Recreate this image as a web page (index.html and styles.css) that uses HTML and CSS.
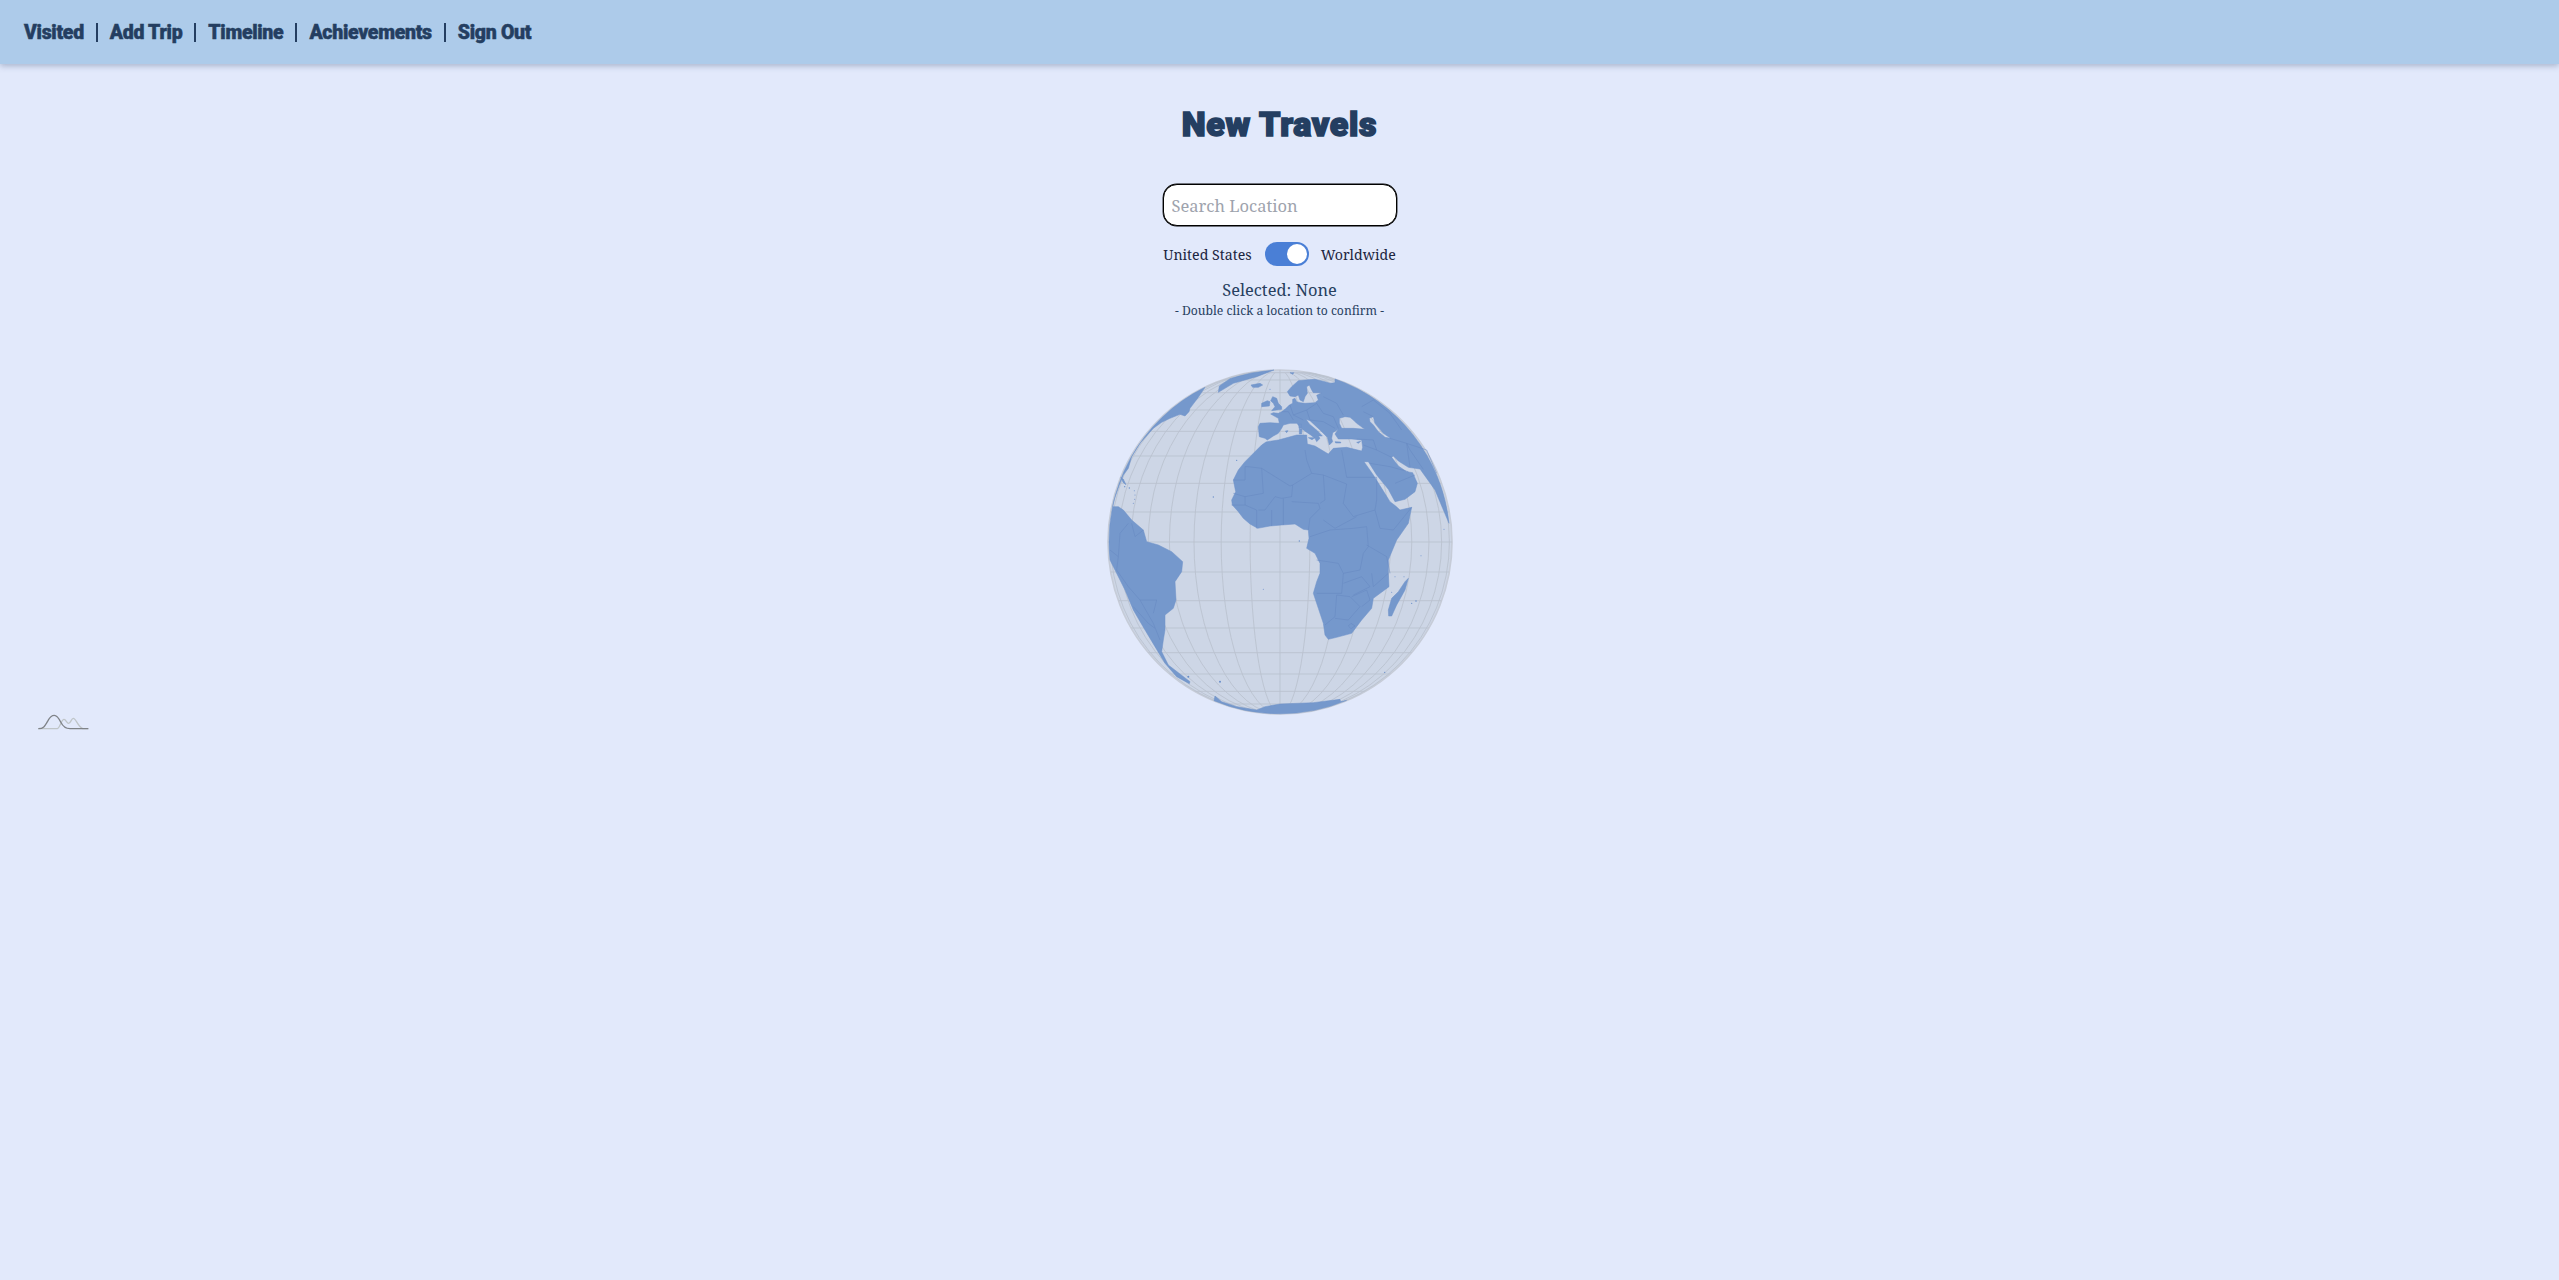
FILE: index.html
```html
<!DOCTYPE html>
<html lang="en">
<head>
<meta charset="utf-8">
<title>New Travels</title>
<link rel="stylesheet" href="styles.css">
</head>
<body>
<nav class="topbar">
  <a class="nav-link">Visited</a><span class="nav-sep"></span>
  <a class="nav-link">Add Trip</a><span class="nav-sep"></span>
  <a class="nav-link">Timeline</a><span class="nav-sep"></span>
  <a class="nav-link">Achievements</a><span class="nav-sep"></span>
  <a class="nav-link">Sign Out</a>
</nav>
<main class="content">
  <h1 class="title">New Travels</h1>
  <input class="search" type="text" placeholder="Search Location">
  <div class="scope">
    <span>United States</span>
    <span class="toggle"><span class="knob"></span></span>
    <span>Worldwide</span>
  </div>
  <p class="selected">Selected: None</p>
  <p class="hint">- Double click a location to confirm -</p>
  <svg class="globe" viewBox="0 0 1140 1080" role="img" aria-label="Globe">
    <defs>
      <clipPath id="grat"><rect x="0" y="38" width="1140" height="1016"/></clipPath>
      <clipPath id="disc"><circle cx="570" cy="546" r="516"/></clipPath>
    </defs>
    <circle class="ocean" cx="570" cy="546" r="516"/>
    <g class="grid" clip-path="url(#grat)">
      <ellipse cx="570" cy="546" rx="89.6" ry="516"/>
      <ellipse cx="570" cy="546" rx="176.5" ry="516"/>
      <ellipse cx="570" cy="546" rx="258" ry="516"/>
      <ellipse cx="570" cy="546" rx="331.7" ry="516"/>
      <ellipse cx="570" cy="546" rx="395.3" ry="516"/>
      <ellipse cx="570" cy="546" rx="446.9" ry="516"/>
      <ellipse cx="570" cy="546" rx="484.9" ry="516"/>
      <ellipse cx="570" cy="546" rx="508.2" ry="516"/>
    </g>
    <g clip-path="url(#disc)">
      <path class="grid" d="M570,30V1062M54,546H1086M54,456H1086M54,636H1086M54,370H1086M54,722H1086M54,288H1086M54,804H1086M54,214H1086M54,878H1086M54,150H1086M54,942H1086M54,98H1086M54,994H1086M54,60H1086M54,1032H1086M54,38H1086M54,1054H1086"/>
    </g>

    <path class="land" fill-rule="evenodd" d="M528,246L515,255L500,270L480,290L465,305L445,330L430,360L437,395L425,420L427,435L445,455L460,475L480,492L503,505L540,498L575,495L615,492L640,508L655,510L657,535L650,565L675,580L690,610L690,640L680,665L670,700L685,745L700,790L705,825L715,838L740,832L785,820L815,780L845,745L850,715L897,680L895,640L895,600L920,540L955,490L965,442L930,450L917,438L900,425L875,385L850,345L822,305L835,305L860,345L895,388L915,425L945,418L975,395L982,370L968,338L950,335L925,318L905,292L910,288L925,303L955,322L990,327L1035,390L1077,490A516,516 0 0 0 735,57L735,68L720,70L705,65L675,58L645,60L625,62L605,80L592,95L600,108L615,110L625,105L630,120L640,125L645,110L652,100L650,80L658,75L665,90L670,98L695,98L680,106L685,120L675,128L645,130L630,128L620,125L615,115L608,118L608,130L598,135L585,148L575,155L565,160L550,158L542,162L565,175L568,190L540,188L510,190L505,200L508,230L525,235L532,240L550,228L565,220L575,205L580,195L600,190L620,190L640,210L662,225L675,235L680,245L690,235L685,228L697,228L682,212L658,192L648,178L660,182L690,210L712,232L718,255L728,245L725,235L728,218L745,208L735,222L745,237L785,237L815,240L818,262L815,273L770,262L730,265L715,282L675,258L652,252L650,225L620,225L565,240L532,245ZM748,175L765,170L780,172L790,180L800,190L825,208L790,205L755,205L748,190ZM838,175L850,170L855,190L880,220L902,235L885,232L865,215L850,195L840,185Z"/>

    <path class="land" d="M60,600A516,516 0 0 1 345,82L325,112L300,145L297,155L285,168L270,163L240,175L215,187L190,205L150,250L125,290L115,325L100,345L88,375L72,420L68,440L85,440L100,450L125,480L160,510L170,545L205,555L245,575L278,605L275,635L255,665L258,720L250,745L225,765L225,810L220,840L215,875L235,915L300,965L298,971L260,950L225,910L195,860L165,810L130,750L105,690L75,630Z"/>

    <path class="land" d="M385,97L388,78L420,56A516,516 0 0 1 552,30L500,50L430,70Z"/>
    <path class="land" d="M375,1008L395,1025L440,1040L500,1050L525,1040L570,1032L670,1028L750,1018L752,1025L770,1021A516,516 0 0 1 372,1022Z"/>
    <path class="land" d="M955,655L945,690L920,735L905,768L896,768L895,750L905,715L925,695L945,665Z"/>
    <path class="land" d="M548,110L560,115L565,130L575,140L575,148L545,152L555,140L550,130L542,122Z"/>
    <path class="land" d="M515,130L532,122L540,125L538,138L515,140Z"/>
    <path class="land" d="M483,75L510,70L518,75L505,82L488,82Z"/>
    <path class="land" d="M600,38L612,38L608,43Z"/>
    <path class="land" d="M626,192L634,192L634,204L627,205ZM628,206L636,206L635,222L628,222ZM655,233L675,233L666,239ZM735,245L752,246L752,249L737,249ZM800,247L812,244L805,250ZM586,213L594,212L590,218Z"/>
    <path class="land" d="M92,352L100,358L108,374L100,368Z"/>

    <g class="specks">
      <circle cx="440" cy="301" r="2"/><circle cx="370" cy="411" r="2"/><circle cx="520" cy="688" r="1.5"/>
      <circle cx="628" cy="543" r="2"/><circle cx="965" cy="730" r="2"/><circle cx="978" cy="723" r="2.5"/>
      <circle cx="915" cy="650" r="1.5"/><circle cx="942" cy="650" r="1.5"/><circle cx="905" cy="697" r="1.5"/>
      <circle cx="1062" cy="508" r="1.5"/><circle cx="884" cy="937" r="2"/><circle cx="993" cy="587" r="1.5"/>
      <circle cx="390" cy="965" r="3"/><circle cx="295" cy="950" r="3"/><circle cx="540" cy="88" r="1.5"/>
      <circle cx="104" cy="380" r="2"/><circle cx="118" cy="384" r="2"/>
      <circle cx="133" cy="392" r="1.5"/><circle cx="135" cy="405" r="1.5"/><circle cx="134" cy="418" r="1.5"/>
      <circle cx="130" cy="430" r="1.5"/>
    </g>

    <path class="border" d="M465,320L475,320L515,325L600,378L608,375L665,340L650,300L645,270M430,360L465,360L465,320M515,325L520,400L465,410L430,400M608,375L605,410L575,415L555,410L525,450L505,450M465,410L465,435L425,435M465,435L500,450L500,505M545,450L545,498M580,415L580,495M605,425L685,430L690,445L660,475L655,510M665,340L700,345L705,420L690,430M700,345L770,372L760,430L790,470M755,270L770,352L860,352M860,352L860,420L855,450L805,465L790,470M965,442L910,510L870,505L855,450M700,480L735,505L800,470M660,530L720,510L790,505L830,500L835,560L820,580L810,630L760,640L745,610L680,600M830,555L890,590L900,640M760,640L755,700L680,700M740,705L735,770L705,795M740,705L780,710L810,740L775,780L735,775M760,670L815,650L840,680L790,705M785,710L830,690L840,720L815,740M845,640L850,680L895,640M783,790L795,798L783,806L775,798Z"/>
    <path class="border" d="M115,490L90,520L85,590L80,630L115,680L150,720L190,790L210,840M130,740L175,790L195,805M160,510L135,530L125,490M85,590L60,570M150,720L200,720L190,760M575,155L595,155L610,180M600,135L610,165L650,150L680,130M610,165L640,180M650,150L660,180L700,185L735,205M680,130L700,160L730,170L745,205M700,110L740,130L760,165M800,237L850,240L860,270L905,292M820,255L860,270M840,310L900,320L955,335M915,370L975,345M960,322L950,250L900,235M1000,328L960,270L950,250M815,140L850,120L900,160L935,210M820,155L850,170M950,250L1010,270L1040,340"/>
  </svg>
</main>
<svg class="sparkline" viewBox="0 0 270 120" aria-hidden="true">
  <path class="spark-light" d="M55,86H112C120,84 124,58 132,58C138,58 140,70 146,70C152,70 154,55 160,55C168,55 172,78 188,86H205"/>
  <path class="spark-dark" d="M55,86C70,86 74,80 84,62C90,50 96,46 103,46C110,46 116,54 122,66C130,82 138,86 150,86H205"/>
</svg>
<footer class="pagefoot"></footer>
</body>
</html>
```
FILE: styles.css
```css
* { box-sizing: border-box; }
html, body { height: 100%; }
body {
  margin: 0;
  background: #e2e9fb;
  font-family: "Noto Serif", "DejaVu Serif", serif;
  color: #1c2540;
  overflow: hidden;
  display: flex;
  flex-direction: column;
}
.topbar {
  height: 64px;
  flex: none;
  display: flex;
  align-items: center;
  padding-left: 24px;
  background: #adcbea;
  box-shadow: 0 2px 6px rgba(60, 80, 120, 0.35);
  font-family: Roboto, Lato, sans-serif;
  font-weight: 900;
  font-size: 19.5px;
  color: #243e61;
}
.nav-link {
  -webkit-text-stroke: 0.5px #243e61;
  letter-spacing: -0.3px;
  white-space: nowrap;
}
.nav-sep {
  width: 2px;
  height: 19px;
  margin: 0 12px;
  background: #243e61;
}
.content {
  flex: 1;
  display: flex;
  flex-direction: column;
  align-items: center;
}
.title {
  margin: 37px 0 0;
  font-family: Roboto, Lato, sans-serif;
  font-weight: 900;
  font-size: 34px;
  line-height: 46px;
  color: #243e61;
  -webkit-text-stroke: 1.6px #243e61;
  letter-spacing: 0.7px;
}
.search {
  margin-top: 37px;
  width: 234px;
  height: 42px;
  padding: 0 8px;
  border: 1px solid #000;
  box-shadow: 0 0 0 0.4px #000;
  border-radius: 14px;
  background: #fff;
  font: 16.5px "Noto Serif", "DejaVu Serif", serif;
}
.search::placeholder { color: #9ea3ad; }
.scope {
  margin-top: 16px;
  height: 24px;
  display: flex;
  align-items: center;
  gap: 12px;
  font-size: 14.2px;
}
.toggle {
  width: 44px;
  height: 24px;
  margin-left: 1px;
  padding: 2px;
  border-radius: 12px;
  background: #4a7fd6;
  display: flex;
  justify-content: flex-end;
}
.knob {
  width: 20px;
  height: 20px;
  border-radius: 50%;
  background: #fff;
}
.selected {
  margin: 12px 0 0;
  font-size: 16.4px;
  line-height: 24px;
  color: #27405f;
}
.hint {
  margin: 0;
  font-size: 12.2px;
  line-height: 17px;
  color: #27405f;
}
.globe {
  width: 380px;
  height: 360px;
  margin-top: 41px;
  flex: none;
}
.ocean { fill: #cdd6e6; stroke: #c6ccd8; stroke-width: 5; }
.grid { fill: none; stroke: #bac1ce; stroke-width: 2.6; }
.land { fill: #7598cc; stroke: #6d91c8; stroke-width: 1.5; stroke-linejoin: round; }
.specks { fill: #6a8fca; }
.border { fill: none; stroke: #6688c0; stroke-width: 1.6; stroke-linejoin: round; }
.sparkline {
  position: absolute;
  left: 20px;
  top: 700px;
  width: 90px;
  height: 40px;
}
.spark-dark, .spark-light { fill: none; stroke-width: 4; }
.spark-dark { stroke: #7f8388; }
.spark-light { stroke: #bfc5c8; }
.pagefoot {
  height: 0;
  flex: none;
  box-shadow: 0 0 4px 0 rgba(60, 80, 120, 0.25);
}
```
